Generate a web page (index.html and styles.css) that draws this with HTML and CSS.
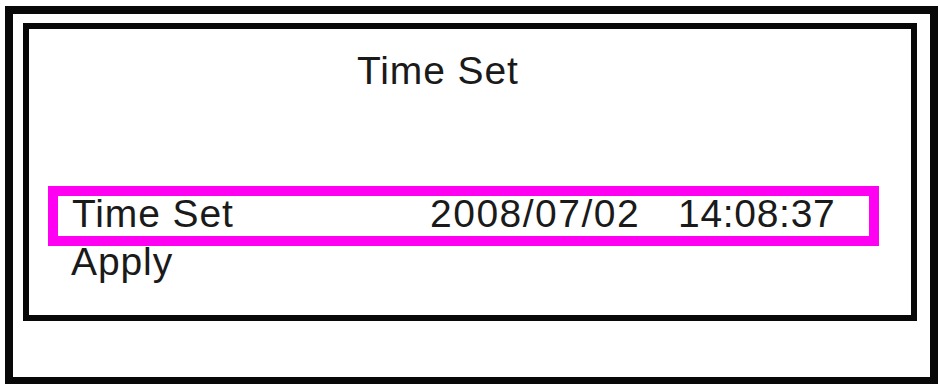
FILE: index.html
```html
<!DOCTYPE html>
<html lang="en">
<head>
<meta charset="utf-8">
<title>Time Set</title>
<link rel="stylesheet" href="styles.css">
</head>
<body>
  <div class="outer">
    <div class="inner">
      <div class="title">Time Set</div>
      <div class="menu">
        <div class="row selected">
          <span class="label">Time Set</span>
          <span class="date">2008/07/02</span>
          <span class="time">14:08:37</span>
        </div>
        <div class="row plain">
          <span class="label">Apply</span>
        </div>
      </div>
    </div>
  </div>
</body>
</html>
```

FILE: styles.css
```css
html, body {
  margin: 0;
  padding: 0;
  background: #ffffff;
}

body {
  font-family: "Liberation Sans", Arial, sans-serif;
  font-size: 39px;
  letter-spacing: 0.9px;
  color: #1a1a1a;
  width: 940px;
  height: 384px;
  overflow: hidden;
}

.outer {
  box-sizing: border-box;
  margin: 6px 0 0 5px;
  width: 933px;
  height: 379px;
  border: 8px solid #080808;
}

.inner {
  box-sizing: border-box;
  margin: 9px 0 0 10px;
  width: 894px;
  height: 298px;
  border: 6px solid #080808;
}

.title {
  margin-top: 22px;
  padding-left: 328px;
  line-height: 40px;
}

.menu {
  margin: 95px 0 0 19px;
}

.row {
  display: flex;
  align-items: baseline;
  white-space: nowrap;
}

.row.selected {
  box-sizing: border-box;
  width: 831px;
  border: 10px solid #ff00f2;
  padding: 0 0 5px 14px;
  line-height: 35px;
}

.row.plain {
  padding-left: 23px;
  line-height: 32px;
}

.label {
  width: 358px;
}

.date {
  width: 248px;
  letter-spacing: 1.5px;
}

.time {
  letter-spacing: 0.7px;
}
```
